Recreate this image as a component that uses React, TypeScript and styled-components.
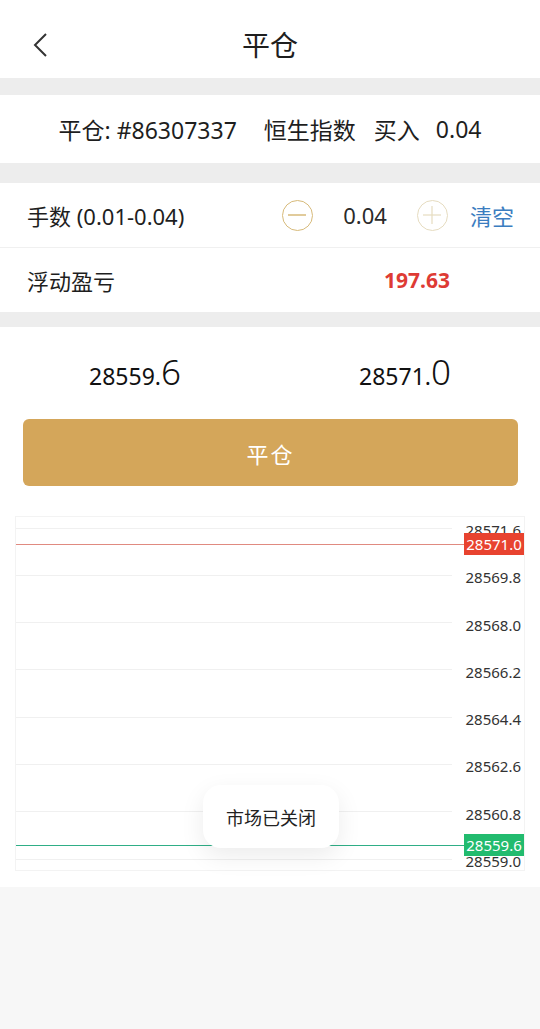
import React from 'react';
import styled, { createGlobalStyle } from 'styled-components';

const GlobalStyle = createGlobalStyle`
  html, body {
    margin: 0;
    padding: 0;
    background: #f7f7f7;
    font-family: "Noto Sans", "Noto Sans CJK SC", sans-serif;
    color: #222;
  }
  * { box-sizing: border-box; }
`;

const Page = styled.div`
  width: 540px;
  min-height: 1029px;
  background: #f7f7f7;
  display: flex;
  flex-direction: column;
`;

const Header = styled.header`
  height: 78px;
  background: #fff;
  display: flex;
  align-items: center;
  justify-content: center;
  position: relative;
`;

const BackButton = styled.button`
  position: absolute;
  left: 28px;
  top: 30px;
  width: 26px;
  height: 30px;
  border: none;
  background: none;
  padding: 0;
  display: flex;
  align-items: center;
  justify-content: center;
`;

const Title = styled.h1`
  margin: 0;
  margin-top: 10px;
  font-size: 28px;
  font-weight: 400;
  color: #1e1e1e;
  font-family: "Noto Sans CJK SC", sans-serif;
`;

const Band = styled.div<{ h: number }>`
  height: ${p => p.h}px;
  background: #ededed;
`;

const OrderRow = styled.div`
  height: 68px;
  background: #fff;
  display: flex;
  align-items: center;
  justify-content: center;
  font-size: 23px;
  color: #1e1e1e;
`;

const OrderPart = styled.span<{ gap?: number }>`
  margin-left: ${p => p.gap ?? 0}px;
`;

const FormRow = styled.div<{ h: number; divider?: boolean }>`
  height: ${p => p.h}px;
  background: #fff;
  display: flex;
  align-items: center;
  padding: 0 26px 0 27px;
  border-bottom: ${p => (p.divider ? '1px solid #f0f0f0' : 'none')};
`;

const Label = styled.span`
  font-size: 22px;
  color: #1e1e1e;
  flex: 1;
`;

const Stepper = styled.div`
  display: flex;
  align-items: center;
`;

const StepButton = styled.div<{ faded?: boolean }>`
  width: 31px;
  height: 31px;
  border-radius: 50%;
  border: 1.5px solid ${p => (p.faded ? '#e6dcc0' : '#d7ba7a')};
  display: flex;
  align-items: center;
  justify-content: center;
`;

const Qty = styled.span`
  width: 104px;
  text-align: center;
  font-size: 22px;
  color: #2a2a2a;
`;

const ClearLink = styled.span`
  margin-left: 22px;
  font-size: 22px;
  color: #3b7dc0;
`;

const Profit = styled.span`
  margin-right: 64px;
  font-size: 21px;
  font-weight: 700;
  color: #de3b34;
`;

const TradePanel = styled.section`
  background: #fff;
`;

const Quotes = styled.div`
  height: 92px;
  display: flex;
  align-items: center;
  padding-bottom: 8px;
`;

const Quote = styled.div`
  flex: 1;
  text-align: center;
  font-size: 23px;
  color: #111;
  padding-top: 4px;
`;

const QuoteBig = styled.span`
  font-size: 35px;
  font-weight: 300;
`;

const ButtonWrap = styled.div`
  padding: 0 22px 0 23px;
`;

const CloseButton = styled.button`
  width: 100%;
  height: 67px;
  border: none;
  border-radius: 6px;
  background: #d4a65a;
  color: #fff;
  font-size: 22px;
  font-family: "Noto Sans CJK SC", sans-serif;
  letter-spacing: 2px;
`;

const ChartSection = styled.section`
  background: #fff;
  padding: 30px 15px 16px 15px;
`;

const Chart = styled.div`
  position: relative;
  border: 1px solid #f3f3f3;
  padding: 1px 0 1px 0;
  display: flex;
  flex-direction: column;
  gap: 27.3px;
`;

const GridRow = styled.div`
  height: 20px;
  display: flex;
  align-items: center;
`;

const GridLine = styled.div`
  flex: 1;
  height: 1px;
  background: #f0f0f0;
`;

const AxisLabel = styled.span`
  width: 72px;
  padding-right: 3px;
  text-align: right;
  font-size: 15px;
  color: #333;
  line-height: 20px;
  margin-top: 4px;
`;

const PriceLine = styled.div<{ color: string }>`
  position: absolute;
  left: 0;
  right: 0;
  height: 22px;
  display: flex;
  align-items: center;

  &::before {
    content: '';
    flex: 1;
    height: 1px;
    background: ${p => p.color};
  }
`;

const PriceTag = styled.span<{ bg: string }>`
  width: 60px;
  height: 22px;
  background: ${p => p.bg};
  color: #fff;
  font-size: 15px;
  line-height: 22px;
  text-align: center;
`;

const Toast = styled.div`
  position: absolute;
  left: 187px;
  top: 268px;
  width: 136px;
  height: 63px;
  border-radius: 18px;
  background: #fff;
  box-shadow: 0 8px 24px rgba(0, 0, 0, 0.08);
  display: flex;
  align-items: center;
  justify-content: center;
  font-size: 18px;
  color: #222;
  font-family: "Noto Sans CJK SC", sans-serif;
`;

const axis = ['28571.6', '28569.8', '28568.0', '28566.2', '28564.4', '28562.6', '28560.8', '28559.0'];

const App: React.FC = () => {
  return (
    <Page>
      <GlobalStyle />
      <Header>
        <BackButton>
          <svg width="16" height="26" viewBox="0 0 16 26">
            <polyline points="13,2 2,13 13,24" fill="none" stroke="#333" strokeWidth="2" />
          </svg>
        </BackButton>
        <Title>平仓</Title>
      </Header>
      <Band h={17} />
      <OrderRow>
        <OrderPart>平仓: #86307337</OrderPart>
        <OrderPart gap={27}>恒生指数</OrderPart>
        <OrderPart gap={18}>买入</OrderPart>
        <OrderPart gap={16}>0.04</OrderPart>
      </OrderRow>
      <Band h={20} />
      <FormRow h={65} divider>
        <Label>手数 (0.01-0.04)</Label>
        <Stepper>
          <StepButton>
            <svg width="18" height="2" viewBox="0 0 18 2">
              <line x1="0" y1="1" x2="18" y2="1" stroke="#d7ba7a" strokeWidth="1.5" />
            </svg>
          </StepButton>
          <Qty>0.04</Qty>
          <StepButton faded>
            <svg width="18" height="18" viewBox="0 0 18 18">
              <line x1="0" y1="9" x2="18" y2="9" stroke="#e6dcc0" strokeWidth="1.2" />
              <line x1="9" y1="0" x2="9" y2="18" stroke="#e6dcc0" strokeWidth="1.2" />
            </svg>
          </StepButton>
        </Stepper>
        <ClearLink>清空</ClearLink>
      </FormRow>
      <FormRow h={64}>
        <Label>浮动盈亏</Label>
        <Profit>197.63</Profit>
      </FormRow>
      <Band h={15} />
      <TradePanel>
        <Quotes>
          <Quote>28559.<QuoteBig>6</QuoteBig></Quote>
          <Quote>28571.<QuoteBig>0</QuoteBig></Quote>
        </Quotes>
        <ButtonWrap>
          <CloseButton>平仓</CloseButton>
        </ButtonWrap>
      </TradePanel>
      <ChartSection>
        <Chart>
          {axis.map(v => (
            <GridRow key={v}>
              <GridLine />
              <AxisLabel>{v}</AxisLabel>
            </GridRow>
          ))}
          <PriceLine color="#e08a80" style={{ top: 16 }}>
            <PriceTag bg="#e8432f">28571.0</PriceTag>
          </PriceLine>
          <PriceLine color="#2fae86" style={{ top: 317 }}>
            <PriceTag bg="#22bb6e">28559.6</PriceTag>
          </PriceLine>
          <Toast>市场已关闭</Toast>
        </Chart>
      </ChartSection>
    </Page>
  );
};

export default App;
